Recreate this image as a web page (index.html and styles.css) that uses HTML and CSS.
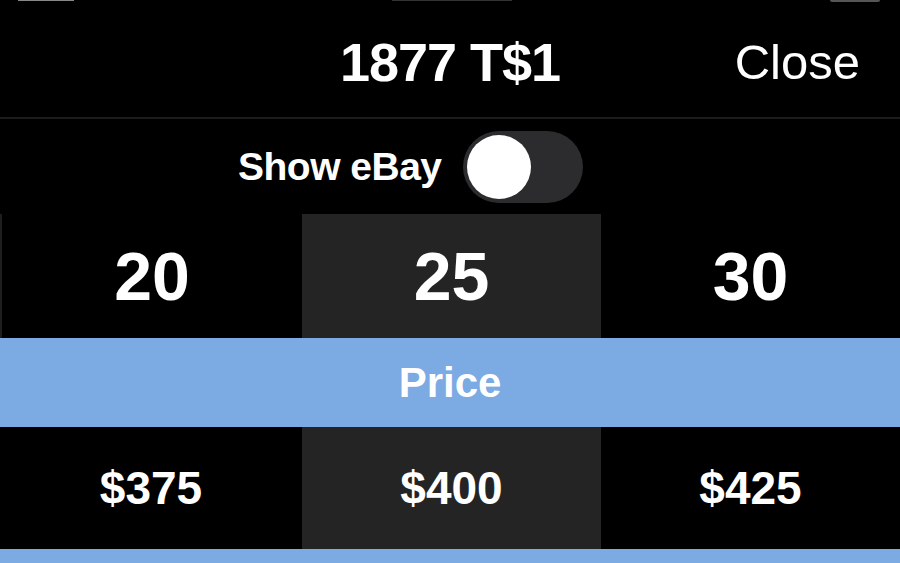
FILE: index.html
```html
<!DOCTYPE html>
<html>
<head>
<meta charset="utf-8">
<link rel="stylesheet" href="styles.css">
</head>
<body>
<div class="screen">
  <div class="status">
    <span class="st st-left"></span>
    <span class="st st-mid"></span>
    <span class="st st-batt"></span>
  </div>
  <header class="header">
    <div class="title">1877 T$1</div>
    <div class="close">Close</div>
  </header>
  <div class="toggle-row">
    <span class="toggle-label">Show eBay</span>
    <span class="switch"><span class="knob"></span></span>
  </div>
  <div class="grade-row">
    <div class="cell edge">20</div>
    <div class="cell selected">25</div>
    <div class="cell">30</div>
  </div>
  <div class="band">Price</div>
  <div class="price-row">
    <div class="cell">$375</div>
    <div class="cell selected">$400</div>
    <div class="cell">$425</div>
  </div>
  <div class="band band-bottom"></div>
</div>
</body>
</html>
```
FILE: styles.css
```css
html, body {
  margin: 0;
  padding: 0;
  background: #000;
}
body {
  width: 900px;
  height: 563px;
  overflow: hidden;
  font-family: "Liberation Sans", Arial, sans-serif;
  color: #fff;
}
.screen {
  display: flex;
  flex-direction: column;
  width: 900px;
  height: 563px;
  overflow: hidden;
}
.status {
  position: relative;
  height: 0;
}
.st {
  position: absolute;
  top: 0;
  height: 1px;
}
.st-left { left: 18px; width: 56px; background: #888; }
.st-mid { left: 392px; width: 120px; background: #333; }
.st-batt { left: 830px; width: 50px; height: 2px; background: #555; border-radius: 0 0 2px 2px; }
.header {
  height: 117px;
  display: grid;
  grid-template-columns: 1fr auto 1fr;
  align-items: center;
  border-bottom: 2px solid #1c1c1e;
  box-sizing: content-box;
}
.title {
  grid-column: 2;
  font-weight: bold;
  font-size: 54px;
  letter-spacing: -1px;
  padding-top: 6px;
}
.close {
  grid-column: 3;
  justify-self: end;
  padding-right: 40px;
  font-size: 49px;
  padding-top: 6px;
}
.toggle-row {
  height: 95px;
  display: flex;
  align-items: center;
  padding-left: 238px;
  gap: 21px;
}
.toggle-label {
  font-weight: bold;
  font-size: 39px;
  letter-spacing: -0.5px;
}
.switch {
  width: 120px;
  height: 72px;
  border-radius: 36px;
  background: #2c2c2e;
  display: flex;
  align-items: center;
  padding-left: 4px;
  box-sizing: border-box;
}
.knob {
  width: 64px;
  height: 64px;
  border-radius: 50%;
  background: #fff;
}
.grade-row, .price-row {
  display: grid;
  grid-template-columns: 302px 299px 1fr;
}
.grade-row { height: 124px; }
.price-row { height: 122px; }
.cell {
  display: flex;
  align-items: center;
  justify-content: center;
  font-weight: bold;
  background: #000;
}
.grade-row .cell { font-size: 68px; }
.price-row .cell { font-size: 46px; }
.cell.edge { border-left: 2px solid #1e1e1e; }
.cell.selected { background: #242424; }
.band {
  height: 89px;
  background: #7caae3;
  display: flex;
  align-items: center;
  justify-content: center;
  font-weight: bold;
  font-size: 42px;
}
.band-bottom {
  flex: 1;
}
```
